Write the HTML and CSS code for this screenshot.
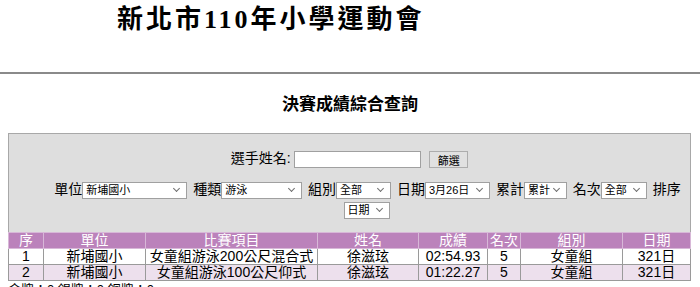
FILE: index.html
```html
<!DOCTYPE html>
<html lang="zh-Hant">

<head>
    <meta charset="UTF-8">
    <meta name="viewport" content="width=device-width, initial-scale=1.0">
    <link rel="stylesheet" href="styles.css">
    <title>決賽成績綜合查詢</title>
</head>

<body>
    <h1 class="site-title">新北市110年小學運動會</h1>
    <hr class="top-rule">
    <h2 class="page-title">決賽成績綜合查詢</h2>

    <div class="page">
        <form class="filter-box" onsubmit="return false;">
            <div class="filter-row name-row">
                <label for="athlete">選手姓名:</label>
                <input type="text" id="athlete" class="name-input">
                <button type="submit" class="filter-btn">篩選</button>
            </div>
            <div class="filter-row option-row">
                <label>單位</label><span class="sel-wrap"><select class="sel sel-unit">
                    <option>新埔國小</option>
                </select></span>
                <label>種類</label><span class="sel-wrap"><select class="sel sel-kind">
                    <option>游泳</option>
                </select></span>
                <label>組別</label><span class="sel-wrap"><select class="sel sel-group">
                    <option>全部</option>
                </select></span>
                <label>日期</label><span class="sel-wrap"><select class="sel sel-date">
                    <option>3月26日</option>
                </select></span>
                <label>累計</label><span class="sel-wrap"><select class="sel sel-sum">
                    <option>累計</option>
                </select></span>
                <label>名次</label><span class="sel-wrap"><select class="sel sel-rank">
                    <option>全部</option>
                </select></span>
                <label>排序</label>
                <br>
                <span class="sel-wrap"><select class="sel sel-order">
                    <option>日期</option>
                </select></span>
            </div>
        </form>

        <table class="results">
            <colgroup>
                <col style="width:35px">
                <col style="width:102px">
                <col style="width:172px">
                <col style="width:101px">
                <col style="width:69px">
                <col style="width:33px">
                <col style="width:102px">
                <col style="width:68px">
            </colgroup>
            <thead>
                <tr>
                    <th>序</th>
                    <th>單位</th>
                    <th>比賽項目</th>
                    <th>姓名</th>
                    <th>成績</th>
                    <th>名次</th>
                    <th>組別</th>
                    <th>日期</th>
                </tr>
            </thead>
            <tbody>
                <tr>
                    <td>1</td>
                    <td>新埔國小</td>
                    <td>女童組游泳200公尺混合式</td>
                    <td>徐滋玹</td>
                    <td>02:54.93</td>
                    <td>5</td>
                    <td>女童組</td>
                    <td>321日</td>
                </tr>
                <tr>
                    <td>2</td>
                    <td>新埔國小</td>
                    <td>女童組游泳100公尺仰式</td>
                    <td>徐滋玹</td>
                    <td>01:22.27</td>
                    <td>5</td>
                    <td>女童組</td>
                    <td>321日</td>
                </tr>
            </tbody>
        </table>

        <div class="totals">金牌：0 銀牌：0 銅牌：0</div>
    </div>
</body>

</html>
```

FILE: styles.css
```css
body {
    margin: 0;
    padding: 0;
    font-family: 'Liberation Sans', Arial, 'Noto Sans CJK TC', sans-serif;
    color: #000;
    background-color: #fff;
}

.site-title {
    margin: 0;
    padding: 4px 0 0 117px;
    font-family: 'Liberation Serif', 'Noto Sans CJK TC', serif;
    font-size: 26px;
    line-height: 32px;
    font-weight: bold;
    letter-spacing: 3px;
}

.top-rule {
    margin: 36px 0 0 0;
    border: 0;
    height: 2px;
    background-color: #8a8a8a;
}

.page-title {
    margin: 21px 0 0 0;
    text-align: center;
    font-family: 'Liberation Serif', 'Noto Sans CJK TC', serif;
    font-size: 17px;
    line-height: 20px;
    font-weight: bold;
}

.page {
    padding: 0 8px;
}

.filter-box {
    width: 681px;
    height: 98px;
    margin: 18px 0 0 0;
    background-color: #dedede;
    border: 1px solid #a8a8a8;
    border-bottom: 0;
    text-align: center;
    font-size: 14px;
}

.filter-row {
    line-height: 20px;
}

.name-row {
    padding-top: 14px;
    padding-bottom: 11px;
}

.option-row {
    padding-left: 36px;
}

.name-input {
    width: 123px;
    height: 15px;
    padding: 0 1px;
    border: 1px solid #a0a0a0;
    vertical-align: middle;
    font-size: 12px;
}

.filter-btn {
    margin-left: 4px;
    width: 39px;
    height: 17px;
    padding: 0;
    font-size: 11px;
    font-family: 'Noto Sans CJK TC', sans-serif;
    background-color: #e1e1e1;
    border: 1px solid #adadad;
    vertical-align: middle;
}

.sel-wrap {
    position: relative;
    display: inline-block;
    vertical-align: middle;
    line-height: 0;
    margin-right: 2px;
}

/* thin chevron like the native windows select */
.sel-wrap::after {
    content: "";
    position: absolute;
    right: 8px;
    top: 4px;
    width: 4px;
    height: 4px;
    border-right: 1px solid #6f6f6f;
    border-bottom: 1px solid #6f6f6f;
    transform: rotate(45deg);
    pointer-events: none;
}

.sel {
    -webkit-appearance: none;
    appearance: none;
    height: 17px;
    margin: 0;
    padding: 0 0 0 3px;
    font-size: 11px;
    line-height: 15px;
    font-family: 'Liberation Sans', 'Noto Sans CJK TC', sans-serif;
    color: #000;
    background-color: #fff;
    border: 1px solid #a0a0a0;
    border-radius: 0;
}

.sel-unit { width: 105px; }
.sel-kind { width: 81px; }
.sel-group { width: 55px; }
.sel-date { width: 65px; }
.sel-sum { width: 43px; }
.sel-rank { width: 46px; }
.sel-order { width: 46px; }

.results {
    width: 683px;
    border-collapse: collapse;
    table-layout: fixed;
    font-size: 14px;
}

.results th,
.results td {
    padding: 0;
    line-height: 15px;
    text-align: center;
    border: 1px solid #9a9a9a;
    white-space: nowrap;
    overflow: hidden;
}

.results th {
    background-color: #bb82bb;
    color: #fff;
    font-weight: normal;
    border-color: #d8b8d8;
}

.results tbody tr:nth-child(2) td {
    background-color: #ede0ed;
}

.totals {
    margin-top: 1px;
    font-size: 13px;
    line-height: 15px;
}
```
